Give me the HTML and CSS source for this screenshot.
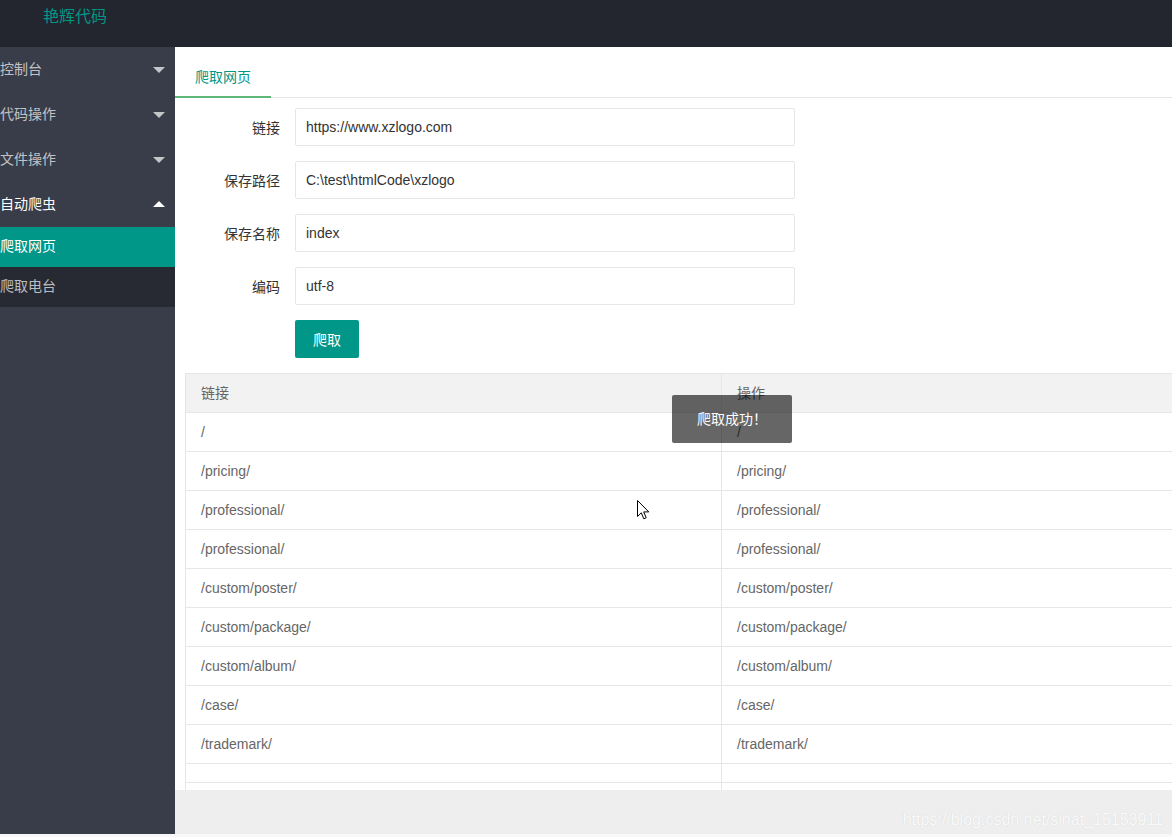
FILE: index.html
```html
<!DOCTYPE html>
<html lang="zh-CN">
<head>
<meta charset="utf-8">
<title>艳辉代码</title>
<link rel="stylesheet" href="styles.css">
</head>
<body>
<div class="app">
  <header class="header">
    <div class="logo">艳辉代码</div>
  </header>
  <div class="main">
    <aside class="side">
      <ul class="nav">
        <li class="nav-item"><span class="nav-text">控制台</span><span class="caret down"></span></li>
        <li class="nav-item"><span class="nav-text">代码操作</span><span class="caret down"></span></li>
        <li class="nav-item"><span class="nav-text">文件操作</span><span class="caret down"></span></li>
        <li class="nav-item open"><span class="nav-text">自动爬虫</span><span class="caret up"></span></li>
        <li class="nav-child">
          <div class="child-item active">爬取网页</div>
          <div class="child-item">爬取电台</div>
        </li>
      </ul>
    </aside>
    <section class="right">
      <div class="body">
        <div class="tab-title">
          <div class="tab this">爬取网页</div>
        </div>
        <form class="form">
          <div class="form-item">
            <label class="label">链接</label>
            <input class="input" type="text" value="https://www.xzlogo.com">
          </div>
          <div class="form-item">
            <label class="label">保存路径</label>
            <input class="input" type="text" value="C:\test\htmlCode\xzlogo">
          </div>
          <div class="form-item">
            <label class="label">保存名称</label>
            <input class="input" type="text" value="index">
          </div>
          <div class="form-item">
            <label class="label">编码</label>
            <input class="input" type="text" value="utf-8">
          </div>
          <div class="form-item">
            <span class="label"></span>
            <button class="btn" type="button">爬取</button>
          </div>
        </form>
        <table class="table">
          <thead>
            <tr><th>链接</th><th>操作</th></tr>
          </thead>
          <tbody>
            <tr><td>/</td><td>/</td></tr>
            <tr><td>/pricing/</td><td>/pricing/</td></tr>
            <tr><td>/professional/</td><td>/professional/</td></tr>
            <tr><td>/professional/</td><td>/professional/</td></tr>
            <tr><td>/custom/poster/</td><td>/custom/poster/</td></tr>
            <tr><td>/custom/package/</td><td>/custom/package/</td></tr>
            <tr><td>/custom/album/</td><td>/custom/album/</td></tr>
            <tr><td>/case/</td><td>/case/</td></tr>
            <tr><td>/trademark/</td><td>/trademark/</td></tr>
            <tr class="empty"><td></td><td></td></tr>
            <tr class="blank"><td></td><td></td></tr>
          </tbody>
        </table>
      </div>
      <footer class="footer">
        <span class="watermark">https://blog.csdn.net/sinat_15153911</span>
      </footer>
    </section>
  </div>
  <div class="toast">爬取成功！</div>
  <svg class="cursor" width="13" height="21" viewBox="0 0 13 21">
    <path d="M0.5 0.5 L0.5 16.5 L4.3 12.8 L6.8 18.8 L9.2 17.8 L6.7 11.9 L11.8 11.9 Z" fill="#fff" stroke="#000" stroke-width="1" stroke-linejoin="miter"/>
  </svg>
</div>
</body>
</html>
```

FILE: styles.css
```css
* { box-sizing: border-box; }

html, body {
  margin: 0;
  padding: 0;
  background: #f8f8f8;
}

body {
  font-family: "Liberation Sans", Arial, "Noto Sans CJK SC", sans-serif;
  font-size: 14px;
  color: #333;
}

.app {
  position: relative;
  height: 834px;
  display: flex;
  flex-direction: column;
  overflow: hidden;
}

.header {
  height: 47px;
  flex: none;
  background: #23262e;
}

.logo {
  padding-left: 43px;
  line-height: 33px;
  font-size: 16px;
  color: #009688;
}

.main {
  flex: 1;
  display: flex;
  min-height: 0;
}

.side {
  width: 175px;
  flex: none;
  background: #393d49;
}

.nav {
  list-style: none;
  margin: 0;
  padding: 0;
}

.nav-item {
  height: 45px;
  display: flex;
  align-items: center;
  justify-content: space-between;
  color: rgba(255, 255, 255, 0.7);
  padding-right: 10px;
}

.nav-item.open { color: #fff; }

.nav-text { margin-bottom: 3px; }

.caret {
  width: 0;
  height: 0;
  border-left: 6px solid transparent;
  border-right: 6px solid transparent;
}

.caret.down { border-top: 6px solid #c4c5c8; margin-top: 1px; }
.caret.up { border-bottom: 6px solid #fff; margin-top: -1px; }

.nav-child {
  background: rgba(0, 0, 0, 0.3);
}

.child-item {
  height: 40px;
  line-height: 39px;
  color: rgba(255, 255, 255, 0.7);
}

.child-item.active {
  background: #009688;
  color: #fff;
}

.right {
  flex: 1;
  min-width: 0;
  display: flex;
  flex-direction: column;
}

.body {
  flex: 1;
  min-height: 0;
  overflow: hidden;
  background: #fff;
}

.tab-title {
  margin-top: 10px;
  height: 41px;
  border-bottom: 1px solid #e6e6e6;
  display: flex;
}

.tab {
  height: 40px;
  line-height: 40px;
  padding: 0 20px;
  color: #009688;
  position: relative;
}

.tab.this::after {
  content: "";
  position: absolute;
  left: 0;
  right: 0;
  bottom: -1px;
  height: 2px;
  background: #5fb878;
}

.form {
  margin: 10px 0 0;
  display: flex;
  flex-direction: column;
  gap: 15px;
}

.form-item {
  display: flex;
  align-items: center;
}

.label {
  width: 105px;
  padding-right: 15px;
  text-align: right;
  color: #333;
  flex: none;
  box-sizing: content-box;
}

.input {
  width: 500px;
  height: 38px;
  border: 1px solid #e6e6e6;
  border-radius: 2px;
  padding: 0 10px;
  font-family: inherit;
  font-size: 14px;
  color: #333;
  outline: none;
}

.btn {
  height: 38px;
  padding: 0 18px;
  border: none;
  border-radius: 2px;
  background: #009688;
  color: #fff;
  font-family: inherit;
  font-size: 14px;
}

.table {
  margin: 15px 0 0 10px;
  border-collapse: collapse;
  table-layout: fixed;
  width: 1072px;
  color: #666;
}

.table th,
.table td {
  width: 536px;
  border: 1px solid #e6e6e6;
  padding: 9px 15px;
  line-height: 20px;
  text-align: left;
  font-weight: normal;
}

.table th {
  background: #f2f2f2;
}

.table tr.empty td {
  height: 19px;
  padding: 0;
}

.table tr.blank td {
  height: 39px;
}

.footer {
  height: 44px;
  flex: none;
  background: #eee;
  display: flex;
  align-items: flex-end;
  justify-content: flex-end;
  padding: 0 9px 5px 0;
}

.watermark {
  font-size: 16px;
  color: #fafafa;
  text-shadow: 0 0 1px #d0d0d0;
}

.toast {
  position: absolute;
  left: 672px;
  top: 395px;
  width: 120px;
  height: 48px;
  line-height: 48px;
  text-align: center;
  background: rgba(0, 0, 0, 0.6);
  border-radius: 2px;
  color: #fff;
  font-size: 14px;
}

.cursor {
  position: absolute;
  left: 637px;
  top: 500px;
}
```
